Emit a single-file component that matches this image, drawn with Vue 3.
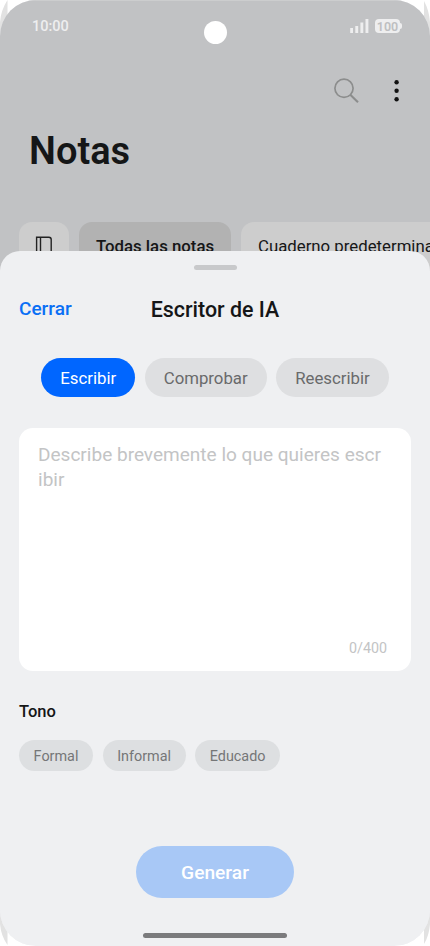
<script setup>
import { ref } from 'vue'

const modes = ['Escribir', 'Comprobar', 'Reescribir']
const tones = ['Formal', 'Informal', 'Educado']
const activeMode = ref('Escribir')
</script>

<template>
  <div class="device">
    <svg class="frame" viewBox="0 0 430 946" aria-hidden="true">
      <path d="M7.5 0Q1 10 0 22V924Q1 936 7.5 945ZM424 1Q429 10 430 22V924Q429 936 424 944Z" fill="#e2e2e2" />
    </svg>
    <main class="screen">
      <section class="notes">
        <header class="status">
          <span class="time">10:00</span>
          <div class="indicators">
            <svg class="signal" width="20" height="16" viewBox="0 0 20 16">
              <path d="M.2 10h2.8v5H.2zM5.3 8h2.9v7H5.3zM10.4 4.5h2.9V15h-2.9zM15.5 1h2.9v14h-2.9z" fill="#eeeeef" />
            </svg>
            <span class="battery">100</span>
          </div>
          <i class="camera"></i>
        </header>
        <div class="toolbar">
          <svg width="28" height="28" viewBox="0 0 28 28" fill="none" stroke="#8c8d8d" stroke-width="1.7">
            <circle cx="12" cy="12.3" r="9.1" />
            <path d="m18.3 18.8 7.7 7.5" stroke-width="2.1" />
          </svg>
          <svg width="8" height="28" viewBox="0 0 8 28" fill="#111">
            <circle cx="3.6" cy="6.3" r="2.2" /><circle cx="3.6" cy="14.8" r="2.2" /><circle cx="3.6" cy="23.3" r="2.2" />
          </svg>
        </div>
        <h1>Notas</h1>
        <nav class="books">
          <span class="book icon">
            <svg width="18" height="24" viewBox="0 0 18 24" fill="none" stroke="#222" stroke-width="1.4">
              <path d="M1.6 1.2h12.3q2.3 0 2.3 2.3V20q0 2.3-2.3 2.3H1.6ZM5.5 1.2v21" />
            </svg>
          </span>
          <span class="book selected">Todas las notas</span>
          <span class="book wide">Cuaderno predeterminado</span>
        </nav>
      </section>

      <section class="sheet">
        <i class="grip"></i>
        <header class="heading">
          <button class="close">Cerrar</button>
          <h2>Escritor de IA</h2>
        </header>
        <div class="modes">
          <button
            v-for="mode in modes"
            :key="mode"
            class="mode"
            :class="{ active: mode === activeMode }"
            @click="activeMode = mode"
          >{{ mode }}</button>
        </div>
        <div class="prompt">
          <p>Describe brevemente lo que quieres escr<br>ibir</p>
          <span class="count">0/400</span>
        </div>
        <h3>Tono</h3>
        <div class="tones">
          <button v-for="tone in tones" :key="tone" class="tone">{{ tone }}</button>
        </div>
        <button class="generate">Generar</button>
        <i class="home"></i>
      </section>
    </main>
  </div>
</template>

<style>
body { margin: 0; background: #fff; }
</style>

<style scoped>
* { box-sizing: border-box; }
h1, h2, h3, p { margin: 0; }
button { border: 0; padding: 0; background: none; font: inherit; color: inherit; white-space: nowrap; }
i { display: block; }
svg { display: block; flex: none; }

.device { position: relative; width: 430px; height: 946px; overflow: hidden; font-family: Roboto, sans-serif; color: #151617; }
.frame { position: absolute; inset: 0; width: 430px; height: 946px; }
.screen { position: relative; width: 430px; height: 945.5px; border-radius: 36px; overflow: hidden; background: #eff0f2; }

.notes { height: 287px; background: #c1c2c4; border-top: 1px solid #cccdce; overflow: hidden; }
.status { position: relative; height: 51px; padding: 0 30px 0 32px; display: flex; justify-content: space-between; align-items: center; }
.time { font-size: 14.5px; font-weight: 500; line-height: 20px; color: #eeeeef; }
.indicators { display: flex; align-items: center; gap: 5px; }
.signal { margin-top: -1px; }
.battery { position: relative; width: 25px; height: 14px; border-radius: 4px; background: #eeeeef; color: #bebfc1; font-size: 12.5px; font-weight: 600; line-height: 15px; text-align: center; margin-top: -1px; }
.battery::after { content: ''; position: absolute; left: 25px; top: 4px; width: 1.5px; height: 6px; border-radius: 0 2px 2px 0; background: #eeeeef; }
.camera { position: absolute; left: 203.5px; top: 19.5px; width: 23px; height: 23px; border-radius: 50%; background: #fff; }
.toolbar { height: 77px; padding: 24px 29.5px 0 0; display: flex; justify-content: flex-end; gap: 32.5px; }
h1 { height: 93px; padding: 0 29px; font-size: 38px; font-weight: 600; line-height: 45px; }
.books { display: flex; gap: 10px; padding-left: 19px; }
.book { flex: none; height: 49px; border-radius: 13px; background: #cdcdcd; font-size: 16.8px; line-height: 49px; text-align: center; white-space: nowrap; }
.icon { width: 50px; display: flex; justify-content: center; padding-top: 14px; }
.selected { width: 152px; background: #b2b2b2; font-weight: 500; }
.wide { width: 220px; padding-left: 17px; text-align: left; }

.sheet { position: relative; margin-top: -36px; height: 694px; padding: 14px 19px 7px; border-radius: 20px 20px 0 0; background: #eff0f2; display: flex; flex-direction: column; }
.grip { width: 43px; height: 5px; border-radius: 3px; background: #c8c9cb; align-self: center; }
.heading { margin-top: 24px; height: 30px; display: grid; grid-template-columns: 1fr auto 1fr; align-items: center; }
.close { justify-self: start; font-size: 19px; font-weight: 500; line-height: 22px; margin-top: -2px; color: #0a6ff5; }
h2 { font-size: 21.4px; font-weight: 500; line-height: 31px; }
.modes { margin-top: 34px; display: flex; justify-content: center; gap: 9.5px; }
.mode { height: 39px; padding: 0 19px; border-radius: 20px; background: #dedfe1; color: #696a6b; font-size: 16.8px; line-height: 40px; }
.mode.active { background: #0066ff; color: #fff; }
.prompt { margin-top: 31px; height: 243px; padding: 14px 24px 13px 19px; border-radius: 14px; background: #fff; color: #c3c4c5; display: flex; flex-direction: column; justify-content: space-between; }
.prompt p { font-size: 19.05px; line-height: 25px; white-space: nowrap; }
.count { align-self: flex-end; font-size: 14.3px; line-height: 20px; }
h3 { margin-top: 31px; font-size: 16.5px; font-weight: 500; line-height: 20px; }
.tones { margin-top: 17.5px; display: flex; gap: 9.5px; }
.tone { height: 31px; padding: 0 14.6px; border-radius: 16px; background: #dddfe1; color: #757677; font-size: 14.4px; line-height: 33px; }
.generate { margin-top: 75px; width: 158px; height: 52.5px; border-radius: 27px; align-self: center; background: #a8c8f6; color: #fff; font-size: 19.2px; font-weight: 500; line-height: 54px; }
.home { width: 144px; height: 5px; margin-top: auto; border-radius: 3px; align-self: center; background: #7b7b7d; }
</style>
